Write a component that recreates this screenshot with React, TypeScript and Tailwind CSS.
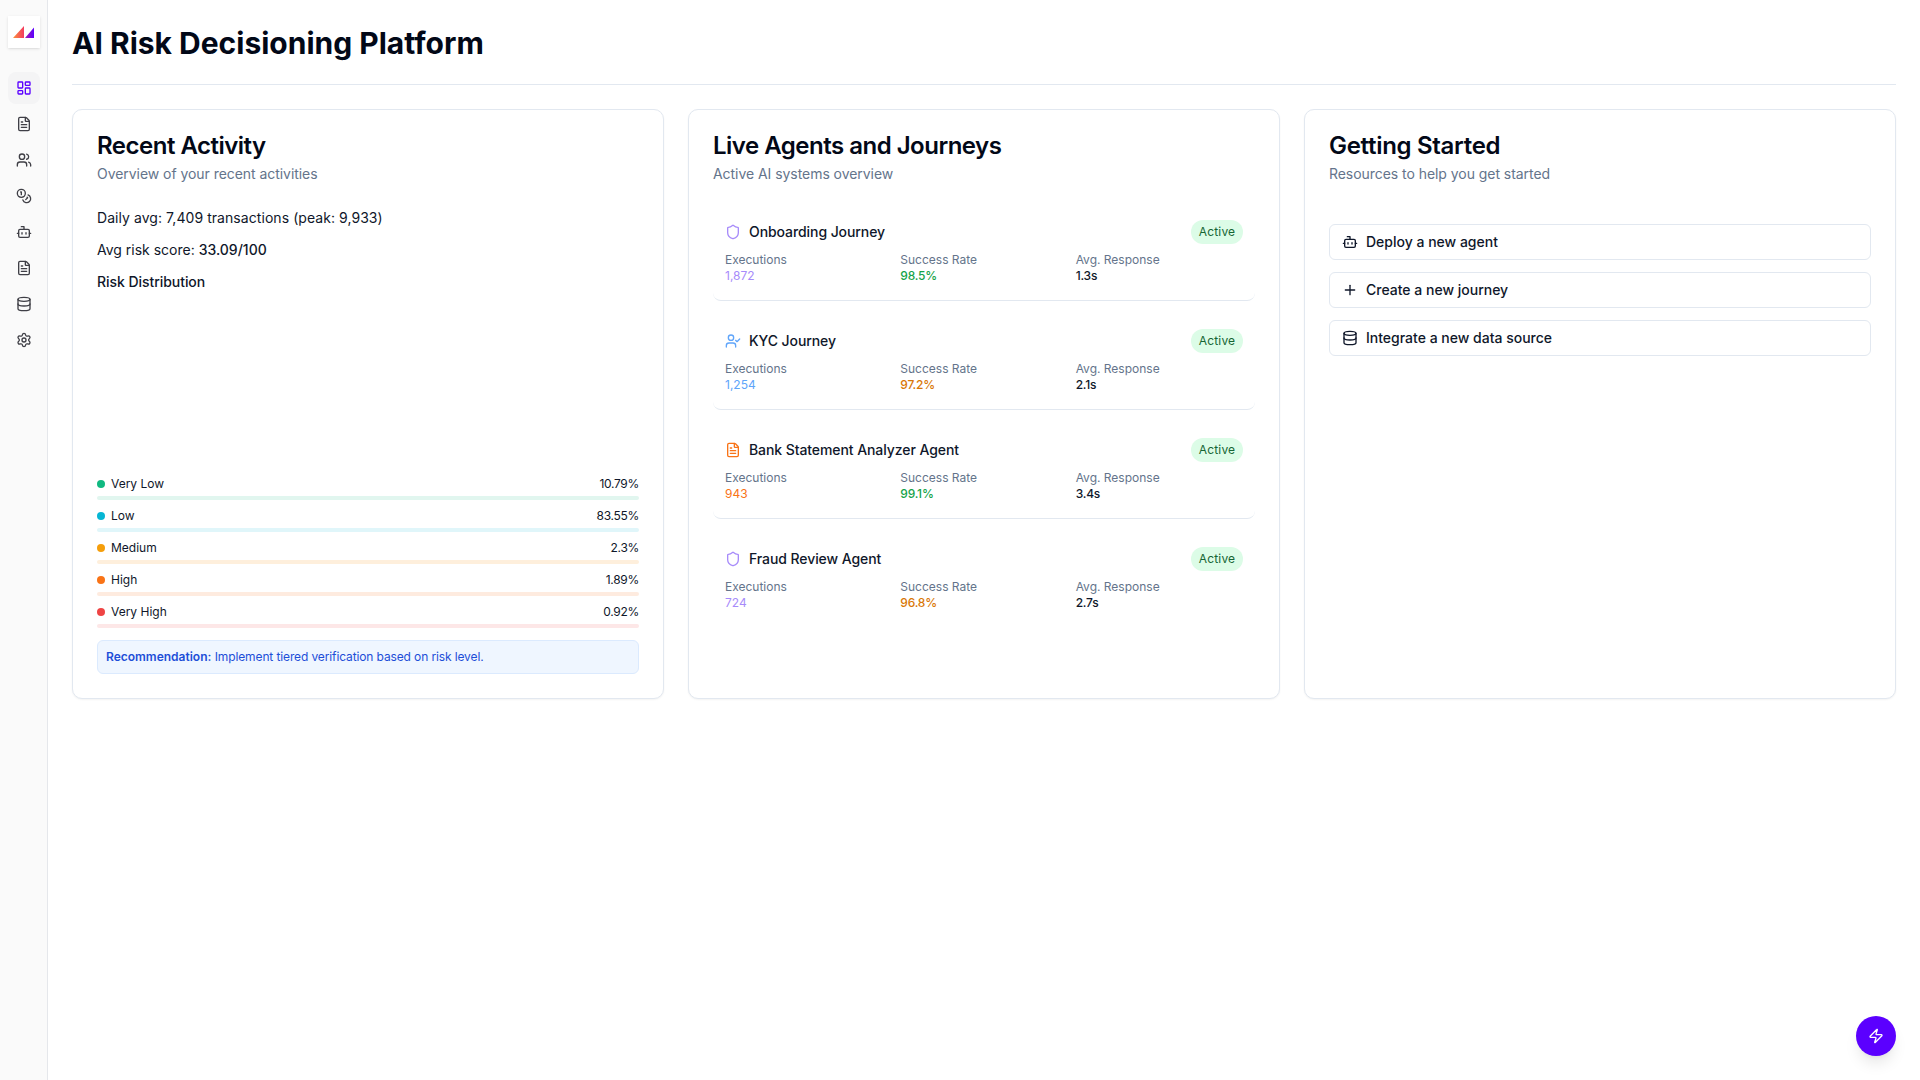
import type { ReactNode } from "react";
import {
  Bot,
  Coins,
  Database,
  FileText,
  LayoutDashboard,
  Plus,
  Settings,
  Shield,
  UserCheck,
  Users,
  Zap,
} from "lucide-react";

const navIcons = [FileText, Users, Coins, Bot, FileText, Database, Settings];

const risks = [
  { label: "Very Low", value: "10.79%", dot: "bg-[#10b981]", track: "bg-[#e1f6ef]" },
  { label: "Low", value: "83.55%", dot: "bg-[#06b6d4]", track: "bg-[#e0f6fa]" },
  { label: "Medium", value: "2.3%", dot: "bg-[#f59e0b]", track: "bg-[#feefdc]" },
  { label: "High", value: "1.89%", dot: "bg-[#f97316]", track: "bg-[#feebdf]" },
  { label: "Very High", value: "0.92%", dot: "bg-[#ef4444]", track: "bg-[#fde7e7]" },
];

const agents = [
  {
    name: "Onboarding Journey",
    Icon: Shield,
    tone: "text-[#a78bfa]",
    executions: "1,872",
    rate: "98.5%",
    rateTone: "text-[#16a34a]",
    response: "1.3s",
  },
  {
    name: "KYC Journey",
    Icon: UserCheck,
    tone: "text-[#60a5fa]",
    executions: "1,254",
    rate: "97.2%",
    rateTone: "text-[#d97706]",
    response: "2.1s",
  },
  {
    name: "Bank Statement Analyzer Agent",
    Icon: FileText,
    tone: "text-[#f97316]",
    executions: "943",
    rate: "99.1%",
    rateTone: "text-[#16a34a]",
    response: "3.4s",
  },
  {
    name: "Fraud Review Agent",
    Icon: Shield,
    tone: "text-[#a78bfa]",
    executions: "724",
    rate: "96.8%",
    rateTone: "text-[#d97706]",
    response: "2.7s",
  },
];

const actions = [
  { label: "Deploy a new agent", Icon: Bot },
  { label: "Create a new journey", Icon: Plus },
  { label: "Integrate a new data source", Icon: Database },
];

function Logo() {
  return (
    <div className="flex h-8 w-8 items-center justify-center bg-white shadow-sm">
      <svg width="21" height="12" viewBox="0 0 21 12">
        <defs>
          <linearGradient id="logo-fill" gradientUnits="userSpaceOnUse" x1="0" y1="0" x2="21" y2="0">
            <stop offset="0" stopColor="#fb923c" />
            <stop offset="0.5" stopColor="#f43f5e" />
            <stop offset="0.58" stopColor="#a21caf" />
            <stop offset="1" stopColor="#5b00ff" />
          </linearGradient>
        </defs>
        <path d="M0 12 L11 0 V12 Z M12 12 L21 1.5 V12 Z" fill="url(#logo-fill)" />
      </svg>
    </div>
  );
}

function Sidebar() {
  return (
    <aside className="flex w-12 shrink-0 flex-col items-center border-r border-[#e5e7eb] bg-[#fafafa] pt-4">
      <Logo />
      <nav className="mt-6 flex flex-col gap-1">
        <div className="flex h-8 w-8 items-center justify-center rounded-lg bg-[#f4f4f5] text-[#5b00ff]">
          <LayoutDashboard size={16} />
        </div>
        {navIcons.map((Icon, i) => (
          <div key={i} className="flex h-8 w-8 items-center justify-center text-[#3f3f46]">
            <Icon size={16} />
          </div>
        ))}
      </nav>
    </aside>
  );
}

function Card({
  title,
  subtitle,
  titleClass = "tracking-[-0.5px]",
  children,
}: {
  title: string;
  subtitle: string;
  titleClass?: string;
  children: ReactNode;
}) {
  return (
    <section className="flex h-[590px] flex-col rounded-[10px] border border-[#e2e8f0] bg-white px-6 pt-5 shadow-[0_1px_2px_rgba(0,0,0,0.05)]">
      <h2 className={`text-2xl font-semibold text-[#020817] ${titleClass}`}>{title}</h2>
      <p className="mt-0.5 text-sm tracking-[-0.05px] text-[#64748b]">{subtitle}</p>
      <div className="mt-6">{children}</div>
    </section>
  );
}

function RecentActivity() {
  return (
    <Card title="Recent Activity" subtitle="Overview of your recent activities">
      <div className="flex flex-col gap-3 text-sm text-[#0f172a]">
        <p className="tracking-[0.06px]">Daily avg: 7,409 transactions (peak: 9,933)</p>
        <p>
          Avg risk score: <span className="font-medium">33.09/100</span>
        </p>
        <p className="font-medium tracking-[-0.05px]">Risk Distribution</p>
      </div>
      <div className="h-[184px]" />
      <div className="flex flex-col gap-2">
        {risks.map((r) => (
          <div key={r.label}>
            <div className="flex items-center justify-between text-xs text-[#0f172a]">
              <div className="flex items-center gap-1.5">
                <span className={`h-2 w-2 rounded-full ${r.dot}`} />
                {r.label}
              </div>
              <span className="tracking-[-0.3px]">{r.value}</span>
            </div>
            <div className={`mt-1 h-1 rounded-full ${r.track}`} />
          </div>
        ))}
      </div>
      <div className="mt-3 rounded-md border border-[#dbeafe] bg-[#eff6ff] p-2 text-xs text-[#1d4ed8]">
        <span className="font-semibold">Recommendation:</span>{" "}
        <span className="tracking-[-0.12px]">Implement tiered verification based on risk level.</span>
      </div>
    </Card>
  );
}

function Stat({ label, value, tone }: { label: string; value: string; tone: string }) {
  return (
    <div>
      <p className="text-[#64748b]">{label}</p>
      <p className={tone}>{value}</p>
    </div>
  );
}

function LiveAgents() {
  return (
    <Card title="Live Agents and Journeys" subtitle="Active AI systems overview">
      <div className="flex flex-col gap-4">
        {agents.map((a, i) => (
          <div
            key={a.name}
            className={`rounded-lg px-3 pb-4 pt-3 ${i < agents.length - 1 ? "border-b border-[#e2e8f0]" : ""}`}
          >
            <div className="flex items-center justify-between">
              <div className="flex items-center gap-2">
                <a.Icon size={16} className={a.tone} />
                <span className="text-sm font-medium tracking-[-0.08px] text-[#0f172a]">{a.name}</span>
              </div>
              <span className="w-[52px] rounded-full bg-[#dcfce7] py-1 text-center text-xs tracking-[0.15px] text-[#166534]">
                Active
              </span>
            </div>
            <div className="mt-2 grid grid-cols-3 gap-2 text-xs">
              <Stat label="Executions" value={a.executions} tone={a.tone} />
              <Stat label="Success Rate" value={a.rate} tone={`font-medium tracking-[-0.2px] ${a.rateTone}`} />
              <Stat label="Avg. Response" value={a.response} tone="font-medium tracking-[-0.2px] text-[#0f172a]" />
            </div>
          </div>
        ))}
      </div>
    </Card>
  );
}

function GettingStarted() {
  return (
    <Card title="Getting Started" subtitle="Resources to help you get started" titleClass="tracking-[-0.3px]">
      <div className="flex flex-col gap-3 pt-4">
        {actions.map(({ label, Icon }) => (
          <button
            key={label}
            className="flex h-9 items-center gap-2 rounded-md border border-[#e2e8f0] bg-white px-3 text-sm font-medium text-[#0f172a]"
          >
            <Icon size={16} />
            {label}
          </button>
        ))}
      </div>
    </Card>
  );
}

export default function App() {
  return (
    <div className="flex min-h-screen bg-white font-['Inter',sans-serif]">
      <Sidebar />
      <main className="flex-1 pl-6 pr-6 pt-[25px]">
        <header className="border-b border-[#e2e8f0] pb-[23px]">
          <h1 className="text-3xl font-bold text-[#020817]">AI Risk Decisioning Platform</h1>
        </header>
        <div className="mt-6 grid grid-cols-3 gap-6">
          <RecentActivity />
          <LiveAgents />
          <GettingStarted />
        </div>
      </main>
      <button className="fixed bottom-6 right-6 flex h-10 w-10 items-center justify-center rounded-full bg-[#5b00ff] text-white shadow-lg">
        <Zap size={16} />
      </button>
    </div>
  );
}
